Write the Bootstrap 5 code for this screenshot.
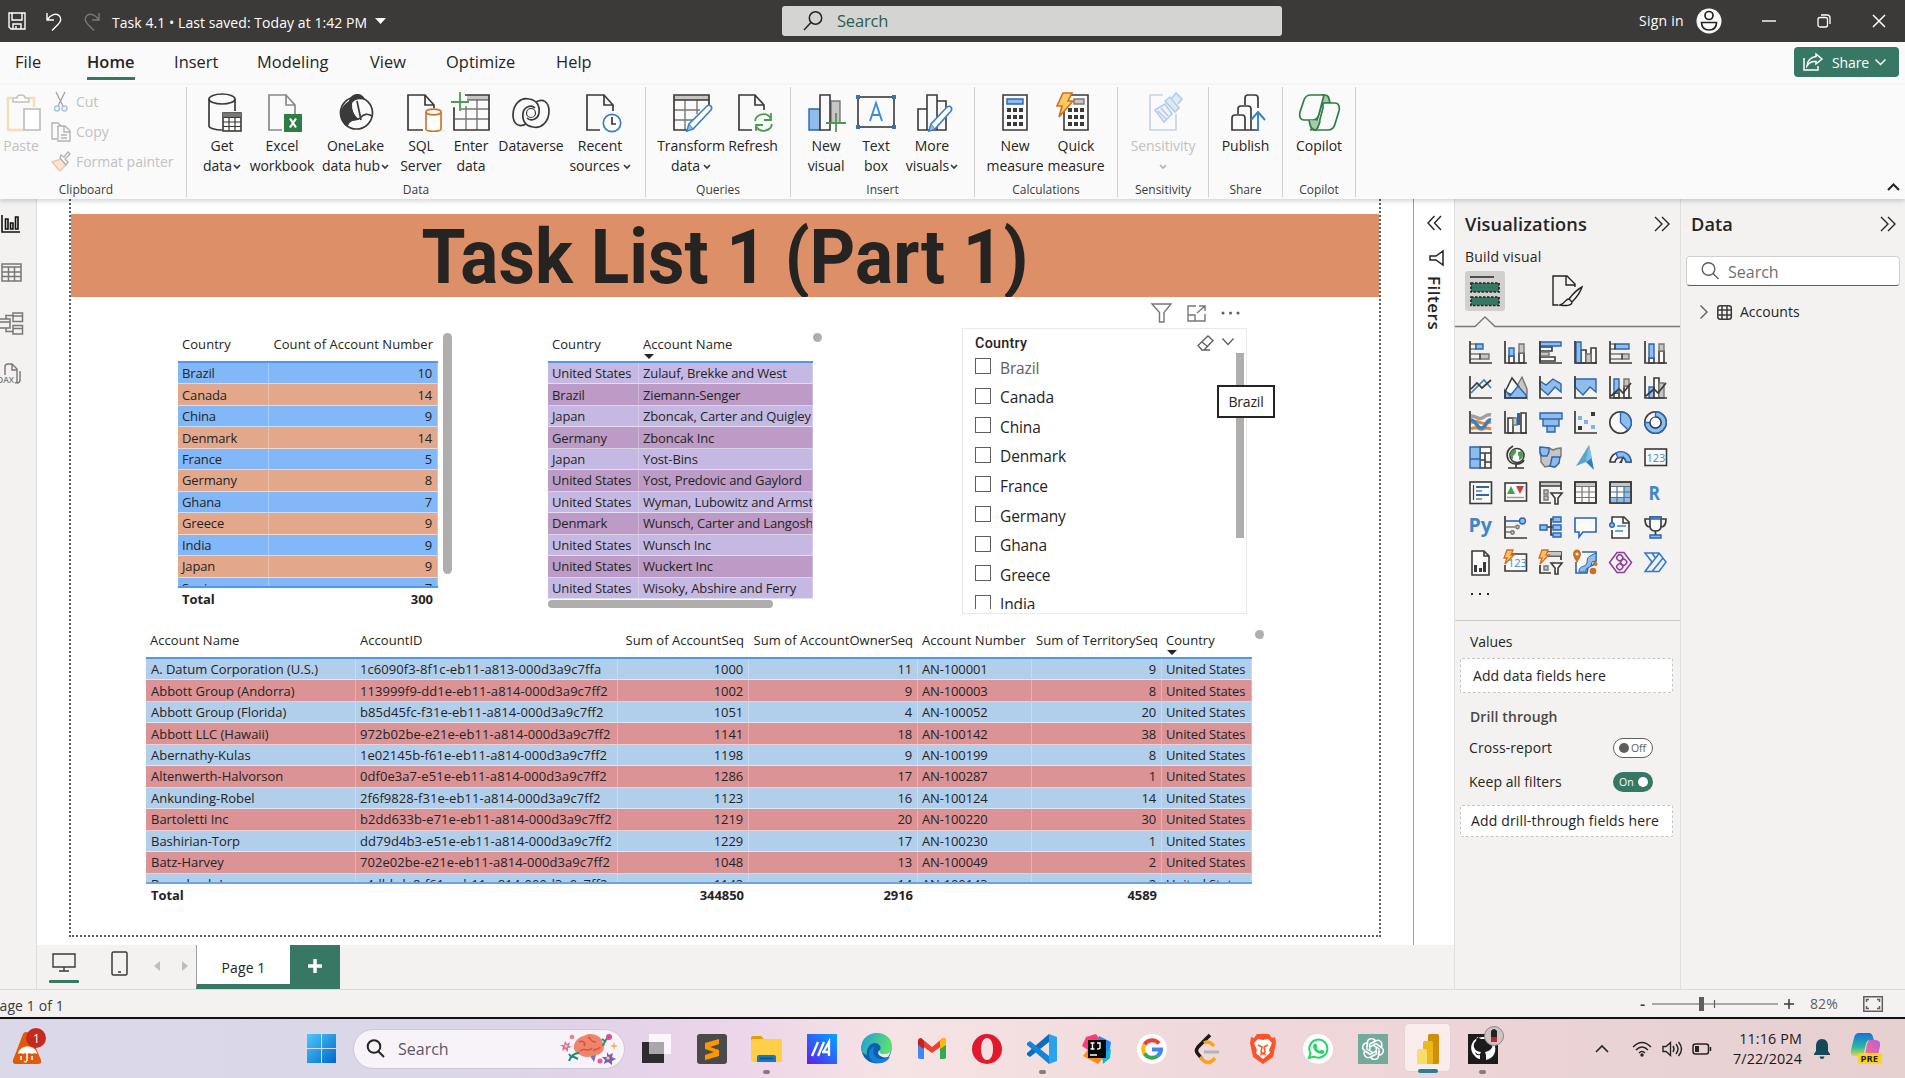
<!DOCTYPE html>
<html lang="en">
<head>
<meta charset="utf-8">
<title>Task 4.1 - Power BI Desktop</title>
<meta name="viewport" content="width=device-width, initial-scale=1">
<link href="https://cdn.jsdelivr.net/npm/bootstrap@5.3.0/dist/css/bootstrap.min.css" rel="stylesheet">
<style>
html,body{height:100%;overflow:hidden}
body{font-family:"Open Sans","Noto Sans",sans-serif;font-size:14px;line-height:20px;color:#252423;width:1905px;height:1078px;background:#f3f2f1}
svg{display:block;flex:none;overflow:visible}
.k{fill:none;stroke:#3b3a39;stroke-width:1.7}
.k1{fill:none;stroke:#3b3a39;stroke-width:1.2}
.w{fill:#fafafa;stroke:#3b3a39;stroke-width:1.6}
.b{fill:#8fbce9;stroke:#2a66b2;stroke-width:1.4}
.g{fill:#c8c6c4;stroke:#797775;stroke-width:1.4}
.gn{fill:none;stroke:#4d9a55;stroke-width:1.8}
/* title bar */
.titlebar{height:42px;background:#3b3a38;color:#fff}
.tb-left{width:782px;font-size:14px;letter-spacing:.06px}
.tb-search{width:500px;height:30px;background:#d4d4d2;border-radius:3px;color:#2c5c4f;font-size:16.5px;letter-spacing:-.2px;padding-left:21px;gap:14px}
.tb-right{width:623px;font-size:14px;letter-spacing:.25px}
/* menu */
.menubar{height:43px;background:#fafafa}
.menubar .nav-link{color:#252423;padding:0;font-size:16.4px;line-height:24px;letter-spacing:.05px;height:35px;padding-top:8px;white-space:nowrap}
.menubar .nav-link.active{font-weight:600;border-bottom:3px solid #377865;height:38px}
.share-btn{width:105px;height:30px;background:#377865;color:#fff;border:0;border-radius:4px;padding:0 9px;font-size:14px;letter-spacing:-.1px}
/* ribbon */
.ribbon{height:114px;background:#fafafa;box-shadow:0 2px 5px rgba(0,0,0,.18);z-index:3;position:relative}
.rgroup{border-right:1px solid #d2d0ce;height:110px;margin-top:2px}
.rbtns{height:95px;padding-top:5px}
.rbtn{text-align:center;font-size:14px;line-height:20px;letter-spacing:-.06px;white-space:nowrap;display:flex;flex-direction:column;align-items:center;flex:none}
.rbtn svg.ic{margin-bottom:4px}
.rlabel{font-size:12px;line-height:16px;text-align:center;letter-spacing:0;color:#3b3a39}
.dimmed{color:#c3c1bf}
.cv{display:inline-block;width:8px;height:6px;vertical-align:1px;margin-left:1px}
/* body */
.work{height:790px}
.rail{width:37px;border-right:1px solid #dfdddb;background:#f3f2f1}
.stage{width:1376px;height:746px;background:#fff;overflow:hidden}
.report{width:1312px;height:738px;margin-left:32px;border:2px dotted #605e5c;border-top:0;padding-top:15px}
.banner{height:83px;background:#dd8f67;text-align:center;overflow:hidden}
.banner h1{font-family:Roboto,"Liberation Sans",sans-serif;font-weight:700;font-size:76px;line-height:83px;margin:0;padding-top:2px;color:#252423;white-space:nowrap;transform:scaleX(.936)}
.visrow{height:331px}
.pbi{border-collapse:separate;border-spacing:0;table-layout:fixed;font-size:13px;line-height:16px;letter-spacing:-.14px;white-space:nowrap}
.pbi th{font-weight:400;height:32px;padding:0 5px 5px 4px;border-bottom:2px solid #4f96f5;letter-spacing:.05px}
.pbi td{height:21.46px;padding:0 5px 0 4px;border-bottom:1px solid rgba(255,255,255,.55);border-right:1px solid rgba(255,255,255,.28);overflow:hidden}
.clipbox{overflow:hidden}
.t1 tr:nth-child(odd) td{background:#82b8f8}.t1 tr:nth-child(even) td{background:#e3a88b}
.t2 tr:nth-child(odd) td{background:#c5b9e3}.t2 tr:nth-child(even) td{background:#bc9bc6}
.t3 tr:nth-child(odd) td{background:#b1ceeb}.t3 tr:nth-child(even) td{background:#db9396}
.t3 td:nth-child(1){letter-spacing:-.02px;padding-left:5px}
.t3 td:nth-child(2){letter-spacing:.06px}
.totals{font-weight:700;font-size:13px;line-height:22px;letter-spacing:-.05px}
.sorted{position:relative}
.sorted::after{content:"";position:absolute;left:5px;bottom:2px;border:5px solid transparent;border-top:5px solid #252423;border-bottom:0}
.sbar{background:#b0aeac;border-radius:5px}
.slicer{width:285px;height:286px;border:1px solid #eaeaea;padding:4px 2px 4px 12px;position:relative}
.slicer-title{font-family:Roboto,sans-serif;font-weight:500;font-size:14.3px;letter-spacing:.3px;line-height:20px}
.slicer-item{height:29.55px;gap:9px;font-size:15.5px;line-height:22px;letter-spacing:-.12px}
.boxy{width:16px;height:16px;border:1.3px solid #605e5c;flex:none;margin-top:-3px}
.tip{position:absolute;left:254px;top:56px;width:58px;height:33px;background:#fff;border:2px solid #252423;font-size:14px;line-height:29px;text-align:center;letter-spacing:-.2px}
.filters{width:41px;height:746px;border-left:1px solid #a19f9d;background:#fff}
.filters span{writing-mode:vertical-rl;font-weight:600;font-size:17px;line-height:18px;letter-spacing:.5px}
.vizpane{width:226px;border-left:1px solid #e1dfdd;background:#f3f2f1}
.datapane{width:225px;border-left:1px solid #e1dfdd;background:#f3f2f1}
.pane-h{font-size:18.2px;font-weight:600;letter-spacing:.1px;line-height:24px}
.vgrid{display:grid;grid-template-columns:repeat(6,35px);grid-auto-rows:35px;padding:13px 0 0 14px}
.well{border:1px dashed #c8c6c4;border-radius:2px;background:#fff;width:213px;margin-left:5px;font-size:14px}
.tog{width:40px;height:20px;border-radius:10px;font-size:10.5px;line-height:18px}
.dsearch{width:214px;height:30px;background:#fff;border:1px solid #d2d0ce;border-bottom-color:#605e5c;border-radius:4px;font-size:16px;color:#706e6c;padding-left:14px;gap:9px}
.pagebar{height:44px;background:#f3f2f1}
.ptab{width:94px;background:#fff;border-left:1px solid #a19f9d;border-bottom:5px solid #377865;font-size:14px;letter-spacing:.1px}
.padd{width:50px;background:#377865}
.status{height:30px;border-top:1px solid #dddbd9;border-bottom:2px solid #111;background:#f3f2f1;font-size:14px;letter-spacing:.1px;color:#3b3a39;overflow:hidden}
.task{height:59px;background:linear-gradient(90deg,#dad8e9 0,#dbd7e8 23%,#e0d3e8 30%,#ecd4ea 38%,#f6e3e3 47%,#f4dfe0 54%,#efd7db 65%,#ecd4d6 80%,#e6d0d0 100%)}
.tslot{width:55.1px;height:59px;position:relative;display:flex;justify-content:center;align-items:center}
.tslot.run::after{content:"";position:absolute;bottom:4px;left:24px;width:7px;height:4px;border-radius:2px;background:#847c80}
.tslot.now::before{content:"";position:absolute;left:4px;top:4px;width:47px;height:49px;border-radius:5px;background:#f8edec;border:1px solid #e3d3d3}
.tslot.now::after{content:"";position:absolute;bottom:5px;left:18px;width:20px;height:4px;border-radius:2px;background:#2a7f96}
.tslot svg{position:relative}
.tsearch{width:272px;height:40px;border-radius:20px;background:#f7f3f9;border:1px solid #cfc6d6;padding-left:12px;font-size:16px;color:#5a5860}
.clock{font-size:14.3px;line-height:20px;text-align:right;letter-spacing:.15px;color:#1b1a1a}
</style>
</head>
<body class="d-flex flex-column">

<!-- Title bar -->
<header class="titlebar d-flex align-items-center flex-shrink-0">
  <div class="tb-left d-flex align-items-center">
    <svg width="18" height="18" viewBox="0 0 18 18" style="margin-left:8px" fill="none" stroke="#fff" stroke-width="1.4"><path d="M1 1h16v16H3l-2-2zM4 1v7h10V1M5 17v-5h8v5M8 14v3"/></svg>
    <svg width="18" height="19" viewBox="0 0 18 19" style="margin-left:19px" fill="none" stroke="#fff" stroke-width="1.4"><path d="M2 1v7h7M2 8C6 2 11 1 14 3.500c3 3 2 6-1 9L7 18.500"/></svg>
    <svg width="18" height="19" viewBox="0 0 18 19" style="margin-left:20px" fill="none" stroke="#7b7977" stroke-width="1.4"><path d="M16 1v7H9M16 8C12 2 7 1 4 3.500c-3 3-2 6 1 9l6 6"/></svg>
    <span style="margin-left:11px;margin-top:4px">Task 4.1 • Last saved: Today at 1:42 PM</span>
    <svg width="11" height="6" viewBox="0 0 11 6" style="margin-left:8px"><path d="M0 0h11L5.500 6z" fill="#fff"/></svg>
  </div>
  <div class="tb-search d-flex align-items-center">
    <svg width="20" height="20" viewBox="0 0 20 20" fill="none" stroke="#252423" stroke-width="1.5"><circle cx="12.500" cy="7" r="6.200"/><path d="M8 11.500L1 19"/></svg>
    <span>Search</span>
  </div>
  <div class="tb-right d-flex align-items-center">
    <span style="margin-left:357px;width:45px;white-space:nowrap">Sign in</span>
    <svg width="26" height="26" viewBox="0 0 26 26" style="margin-left:12px"><circle cx="13" cy="13" r="12.500" fill="#fafafa"/><circle cx="13" cy="7.500" r="4" fill="none" stroke="#252423" stroke-width="1.7"/><path d="M5.500 14.500h15c0 5-3 7.500-7.500 7.500s-7.500-2.500-7.500-7.500z" fill="none" stroke="#252423" stroke-width="1.700"/></svg>
    <svg width="14" height="14" viewBox="0 0 14 14" style="margin-left:40px"><path d="M0 7h14" stroke="#fff" stroke-width="1.400"/></svg>
    <svg width="14" height="14" viewBox="0 0 14 14" style="margin-left:41px" fill="none" stroke="#fff" stroke-width="1.300"><rect x="1" y="3.500" width="9.500" height="9.500" rx="2"/><path d="M4 1h6q3 0 3 3v6"/></svg>
    <svg width="14" height="14" viewBox="0 0 14 14" style="margin-left:41px"><path d="M1 1l12 12M13 1L1 13" stroke="#fff" stroke-width="1.500"/></svg>
  </div>
</header>

<!-- Menu tabs -->
<nav class="menubar d-flex flex-shrink-0">
  <ul class="nav flex-nowrap flex-grow-1" style="padding-left:15px">
    <li class="nav-item" style="width:72px"><a class="nav-link" href="#">File</a></li>
    <li class="nav-item" style="width:87px"><a class="nav-link active d-inline-block" href="#">Home</a></li>
    <li class="nav-item" style="width:83px"><a class="nav-link" href="#">Insert</a></li>
    <li class="nav-item" style="width:113px"><a class="nav-link" href="#">Modeling</a></li>
    <li class="nav-item" style="width:76px"><a class="nav-link" href="#">View</a></li>
    <li class="nav-item" style="width:110px"><a class="nav-link" href="#">Optimize</a></li>
    <li class="nav-item"><a class="nav-link" href="#">Help</a></li>
  </ul>
  <button class="share-btn btn d-flex align-items-center" style="margin:5px 6px 0 0">
    <svg width="20" height="18" viewBox="0 0 20 18" fill="none" stroke="#fff" stroke-width="1.500"><path d="M1 5v12h14v-4M13 1l6 5-6 5V8.500C9 8 6 9.500 4 13c0-5 4-9 9-9.500z"/></svg>
    <span style="margin-left:9px">Share</span>
    <svg width="11" height="7" viewBox="0 0 11 7" style="margin-left:6px" fill="none" stroke="#fff" stroke-width="1.500"><path d="M.5.5l5 5 5-5"/></svg>
  </button>
</nav>

<!-- Ribbon -->
<section class="ribbon d-flex flex-shrink-0">
  <div class="rgroup" style="width:187px">
    <div class="rbtns d-flex">
      <div class="rbtn dimmed" style="width:42px"><svg class="ic" width="40" height="40" viewBox="0 0 40 40" fill="none"><path d="M11 6H7v32h16M29 6h4v9" stroke="#f5dcba" stroke-width="2.500"/><path d="M12 10V6h4c0-4 8-4 8 0h4v4z" stroke="#c3c1bf" stroke-width="1.500" fill="#fff"/><path d="M23 17h16v21H23z" stroke="#bdbbb9" stroke-width="1.600" fill="#fff"/></svg>Paste</div>
      <div class="dimmed" style="font-size:14px;letter-spacing:-.02px;padding-left:9px">
        <div class="d-flex align-items-center" style="height:20px;gap:5px;margin-bottom:10px;white-space:nowrap"><svg width="20" height="20" viewBox="0 0 20 20" fill="none"><path d="M5 0l7 14M14 0L7 14" stroke="#a3a19f" stroke-width="1.300"/><circle cx="6" cy="16.500" r="2.500" stroke="#a6c4e2" stroke-width="1.400"/><circle cx="13.500" cy="16.500" r="2.500" stroke="#a6c4e2" stroke-width="1.400"/></svg>Cut</div>
        <div class="d-flex align-items-center" style="height:20px;gap:5px;margin-bottom:10px"><svg width="20" height="20" viewBox="0 0 20 20" fill="none" stroke="#b5b3b1" stroke-width="1.400"><path d="M6 17H1V1h6l3 3M7 4h7l5 5v10H7zM13 4v6h6M10 13h6M10 16h6"/></svg>Copy</div>
        <div class="d-flex align-items-center" style="height:20px;gap:5px;white-space:nowrap"><svg width="20" height="20" viewBox="0 0 20 20" fill="none" stroke-width="1.400"><path d="M1 10l9-3 5 6-6 6z" fill="#fbe6d3" stroke="#e8c9a9"/><path d="M9 6l6 7 2-3-3-3 5-5-2-2-4 5-3-2z" stroke="#b5b3b1" fill="#fff"/></svg>Format painter</div>
      </div>
    </div>
    <div class="rlabel" style="padding-right:14px">Clipboard</div>
  </div>

  <div class="rgroup" style="width:459px">
    <div class="rbtns d-flex" style="padding-left:9px">
      <div class="rbtn" style="width:52px"><svg class="ic" width="40" height="40" viewBox="0 0 40 40"><path class="k" d="M7 7v27c0 2 6 4 13 4M33 7v12" /><ellipse class="k" cx="20" cy="7" rx="13" ry="5"/><rect class="w" x="21" y="21" width="18" height="18"/><path d="M21 21h18v4H21z" fill="#797775"/><path class="k1" d="M21 25.500h18M21 30h18M21 34.500h18M27 25v14M33 25v14"/></svg>Get<br><span>data<svg class="cv" viewBox="0 0 8 6"><path class="k" d="M1 1l3 3 3-3"/></svg></span></div>
      <div class="rbtn" style="width:68px"><svg class="ic" width="40" height="40" viewBox="0 0 40 40"><path d="M20 38H7V3h17l9 10v9M24 3v10h9" fill="none" stroke="#8a8886" stroke-width="1.700"/><rect x="22" y="22" width="18" height="18" fill="#2e7d46"/><path d="M28 26.500l6 9M34 26.500l-6 9" stroke="#fff" stroke-width="2.200"/></svg>Excel<br>workbook</div>
      <div class="rbtn" style="width:82px;padding-right:3px"><svg class="ic" width="40" height="40" viewBox="0 0 40 40"><circle class="k" cx="20.500" cy="21" r="16"/><path d="M13 9c2-9 14-9 16-1-6-2-12 0-13 4 0 8 4 12 8 16-7-1-12 3-12 7-9-5-11-19 1-26z" fill="#3b3a39"/><path d="M17 10c-2 7 1 14 7 18l-4-18z" fill="#fafafa"/><path class="k" d="M9 33c4-8 11-3 15-7s7-5 12-2M21 9l4 19"/></svg>OneLake<br><span>data hub<svg class="cv" viewBox="0 0 8 6"><path class="k" d="M1 1l3 3 3-3"/></svg></span></div>
      <div class="rbtn" style="width:46px"><svg class="ic" width="40" height="40" viewBox="0 0 40 40"><path class="k" d="M22 38H7V3h17l9 10v3M24 3v10h9"/><path d="M25 20v17c0 3 15 3 15 0V20" fill="#fff" stroke="#cf7630" stroke-width="1.700"/><ellipse cx="32.500" cy="20" rx="7.500" ry="2.800" fill="#fff" stroke="#cf7630" stroke-width="1.700"/></svg>SQL<br>Server</div>
      <div class="rbtn" style="width:54px"><svg class="ic" width="40" height="40" viewBox="0 0 40 40"><path d="M16 3h22v5H16z" fill="#c8c6c4"/><path d="M10 17h28M4 27h34M15 14v24M26 8v30" stroke="#797775" stroke-width="1.400"/><path class="k" d="M14 3h24v35H3V16"/><path d="M3 17v-2M16 8h22" class="k1"/><path class="gn" d="M9 0v19M0 10h18"/></svg>Enter<br>data</div>
      <div class="rbtn" style="width:66px"><svg class="ic" width="40" height="40" viewBox="0 0 40 40"><g class="k"><path d="M15 32C8 36 2 32 2 23 2 12 10 5 18 7c8 1 11 7 10 14-1 6-8 9-12 5"/><path d="M25 10c7-4 13 0 13 9 0 11-8 18-16 16-8-1-11-7-10-14 1-6 8-9 12-5"/></g><circle class="k1" cx="20" cy="21" r="4.500"/></svg>Dataverse</div>
      <div class="rbtn" style="width:72px"><svg class="ic" width="40" height="40" viewBox="0 0 40 40"><path class="k" d="M20 38H7V3h17l9 10v6M24 3v10h9"/><circle cx="32" cy="31" r="8.700" fill="#fff" stroke="#3a7fc4" stroke-width="1.700"/><path class="k" d="M32 25v7h4"/></svg>Recent<br><span>sources<svg class="cv" viewBox="0 0 8 6" style="margin-left:3px"><path class="k" d="M1 1l3 3 3-3"/></svg></span></div>
    </div>
    <div class="rlabel">Data</div>
  </div>

  <div class="rgroup" style="width:145px">
    <div class="rbtns d-flex" style="padding-left:10px">
      <div class="rbtn" style="width:70px"><svg class="ic" width="40" height="40" viewBox="0 0 40 40"><path d="M3 3h35v5H3z" fill="#c8c6c4"/><path d="M3 18h26M3 28h20M14 8v30M26 8v14" stroke="#797775" stroke-width="1.400"/><path class="k" d="M16 38H3V3h35v10M3 8h35"/><path d="M16 39l2-7 18-18c3-2 6 1 4 4L22 37z" fill="#fff" stroke="#3a7fc4" stroke-width="1.600"/><path d="M16 39l2-7 4 5z" fill="#8fbce9" stroke="#3a7fc4"/></svg>Transform<br><span>data<svg class="cv" viewBox="0 0 8 6" style="margin-left:3px"><path class="k" d="M1 1l3 3 3-3"/></svg></span></div>
      <div class="rbtn" style="width:54px"><svg class="ic" width="40" height="40" viewBox="0 0 40 40"><path class="k" d="M19 38H6V3h16l9 10v5M22 3v10h9"/><path class="gn" d="M22 29c1-7 12-10 16-2M38 21v7h-7M39 32c-1 7-12 10-16 2M23 39v-6h7"/></svg>Refresh</div>
    </div>
    <div class="rlabel">Queries</div>
  </div>

  <div class="rgroup" style="width:184px">
    <div class="rbtns d-flex" style="padding-left:11px">
      <div class="rbtn" style="width:48px"><svg class="ic" width="40" height="40" viewBox="0 0 40 40"><path class="b" d="M3 17h11v21H3z"/><path class="g" d="M25 9h9v22h-9z"/><path class="w" d="M14 3h10v35H14z"/><path class="gn" d="M30 21v19M20 31h20"/></svg>New<br>visual</div>
      <div class="rbtn" style="width:52px"><svg class="ic" width="40" height="40" viewBox="0 0 40 40"><rect class="w" x="2" y="5" width="36" height="30"/><path d="M0 3h4v4H0zM36 3h4v4h-4zM0 33h4v4H0zM36 33h4v4h-4z" fill="#2f75b8"/><path d="M14 29l6-18 6 18M16 23h8" fill="none" stroke="#3a8bd6" stroke-width="1.900"/></svg>Text<br>box</div>
      <div class="rbtn" style="width:60px"><svg class="ic" width="40" height="40" viewBox="0 0 40 40"><path class="w" d="M6 17h9v21H6zM15 3h10v35H15zM25 9h9v29h-9z"/><path d="M17 39l2-7 16-17c3-2 6 1 4 4L23 37z" fill="#fff" stroke="#3a7fc4" stroke-width="1.600"/><path d="M17 39l2-7 4 5z" fill="#8fbce9" stroke="#3a7fc4"/></svg>More<br><span>visuals<svg class="cv" viewBox="0 0 8 6"><path class="k" d="M1 1l3 3 3-3"/></svg></span></div>
    </div>
    <div class="rlabel">Insert</div>
  </div>

  <div class="rgroup" style="width:143px">
    <div class="rbtns d-flex" style="padding-left:11px">
      <div class="rbtn" style="width:58px"><svg class="ic" width="40" height="40" viewBox="0 0 40 40"><path class="w" d="M8 3h24v35H8z"/><path class="b" d="M12 7h16v5H12z"/><path d="M12 18h16M12 25h16M12 32h16" stroke="#3b3a39" stroke-width="4" stroke-dasharray="4 2"/></svg>New<br>measure</div>
      <div class="rbtn" style="width:64px"><svg class="ic" width="40" height="40" viewBox="0 0 40 40"><path class="w" d="M8 3h24v35H8z"/><path class="g" d="M18 7h10v5H18z"/><path d="M12 18h16M12 25h16M12 32h16" stroke="#3b3a39" stroke-width="4" stroke-dasharray="4 2"/><path d="M7 1h9l-4 8h5L3 25l3-11H1z" fill="#ffc966" stroke="#cf6f20" stroke-width="1.600"/></svg>Quick<br>measure</div>
    </div>
    <div class="rlabel">Calculations</div>
  </div>

  <div class="rgroup" style="width:91px">
    <div class="rbtns d-flex justify-content-center">
      <div class="rbtn dimmed"><svg class="ic" width="40" height="40" viewBox="0 0 40 40" fill="none" stroke="#b3cde8" stroke-width="1.600"><path d="M20 3H7v35h26V22" stroke="#c3d4e4"/><path d="M12 18l10-6 7 10-8 8zM15 19l8 8M18 16l7 8" fill="#eaf2fa"/><path d="M22 9l5-4 9 11-4 4zM29 6l4-5 6 6-4 5" fill="#dbe9f6"/></svg>Sensitivity<br><svg width="8" height="6" viewBox="0 0 8 6" style="margin-top:8px"><path d="M1 1l3 3 3-3" fill="none" stroke="#b5b3b1" stroke-width="1.700"/></svg></div>
    </div>
    <div class="rlabel">Sensitivity</div>
  </div>
  <div class="rgroup" style="width:74px">
    <div class="rbtns d-flex justify-content-center">
      <div class="rbtn"><svg class="ic" width="40" height="40" viewBox="0 0 40 40"><path class="k" d="M20 38H7V26q0-3 3-3h7q3 0 3 3v12h12M13 22v-5q0-3 3-3h7q3 0 3 3v21M20 13V6q0-3 3-3h7q3 0 3 3v10"/><path d="M33 39V21M26 28l7-8 7 8" fill="none" stroke="#3a7fc4" stroke-width="1.900"/></svg>Publish</div>
    </div>
    <div class="rlabel">Share</div>
  </div>
  <div class="rgroup" style="width:73px">
    <div class="rbtns d-flex justify-content-center">
      <div class="rbtn"><svg class="ic" width="40" height="40" viewBox="0 0 40 40"><g fill="#fafafa" stroke="#2f7d46" stroke-width="1.700"><path d="M22 3h4c4 0 4 4 5 8h-5c-3 0-4 3-5 7l-4 14c-1 4-3 6-6 6" fill="#a6c9a9"/><path d="M12 3h13l-5 19c-1 4-3 6-6 6H5c-4 0-5-4-4-8l4-12c1-3 3-5 7-5z"/><path d="M25 11h11c4 0 5 4 4 8l-4 13c-1 4-3 6-7 6H14c3 0 5-3 6-7l4-15c0-3 0-5 1-5z"/><path d="M10 28c1 6 2 10 7 10 2-2 3-5 4-9" fill="#a6c9a9"/></g></svg>Copilot</div>
    </div>
    <div class="rlabel">Copilot</div>
  </div>
  <div class="ms-auto align-self-end" style="padding:0 5px 8px 0"><svg width="13" height="8" viewBox="0 0 13 8"><path d="M1 7l5.500-5.500L12 7" fill="none" stroke="#252423" stroke-width="2"/></svg></div>
</section>

<!-- Work area -->
<main class="work d-flex flex-shrink-0">
  <aside class="rail d-flex flex-column">
    <svg width="20" height="18" viewBox="0 0 20 18" style="margin:16px 0 0 1px"><path d="M1 0v17h18M4.500 4h2.500v10H4.500zM9.500 8h2.500v6H9.500zM14.500 2h2.500v12h-2.500z" fill="none" stroke="#111" stroke-width="1.600"/></svg>
    <svg width="21" height="19" viewBox="0 0 21 19" style="margin:30px 0 0 1px" fill="none" stroke="#797775" stroke-width="1.500"><path d="M1 1h19v17H1zM1 4h19M1 9h19M1 13.500h19M7.500 4v14M13.500 4v14"/></svg>
    <svg width="24" height="23" viewBox="0 0 24 23" style="margin:30px 0 0 0" fill="none" stroke="#797775" stroke-width="1.500"><path d="M0 7h10v9H0M0 10h10M13 1h9.500v8.500H13zM13 4h9.500M13 13.500h9.500V22H13zM13 16.500h9.500M6 7V3.500h7M6 16v3.500h7"/></svg>
    <svg width="22" height="21" viewBox="0 0 22 21" style="margin:28px 0 0 -1px" fill="none" stroke="#797775" stroke-width="1.400"><path d="M6 12V4q0-3 3-3h4l5 5v12q0 2-2 2M13 1v6h5M21 8v9q0 3-3 3"/><text x="-2" y="20" font-size="8.500" font-weight="600" fill="#797775" stroke="none">DAX</text></svg>
  </aside>

  <div class="d-flex flex-column" style="width:1417px">
    <div class="d-flex">
      <div class="stage">
        <div class="report">
          <div class="banner"><h1>Task List 1 (Part 1)</h1></div>
          <div class="visrow d-flex">

            <div class="d-flex" style="margin:34px 0 0 107px;width:370px">
              <div style="width:260px">
                <div class="clipbox" style="height:257px;border-bottom:2px solid #4f96f5">
                  <table class="pbi" style="width:260px">
                    <colgroup><col style="width:91px"><col></colgroup>
                    <thead><tr><th>Country</th><th class="text-end">Count of Account Number</th></tr></thead>
                    <tbody class="t1">
                      <tr><td>Brazil</td><td class="text-end">10</td></tr>
                      <tr><td>Canada</td><td class="text-end">14</td></tr>
                      <tr><td>China</td><td class="text-end">9</td></tr>
                      <tr><td>Denmark</td><td class="text-end">14</td></tr>
                      <tr><td>France</td><td class="text-end">5</td></tr>
                      <tr><td>Germany</td><td class="text-end">8</td></tr>
                      <tr><td>Ghana</td><td class="text-end">7</td></tr>
                      <tr><td>Greece</td><td class="text-end">9</td></tr>
                      <tr><td>India</td><td class="text-end">9</td></tr>
                      <tr><td>Japan</td><td class="text-end">9</td></tr>
                      <tr><td>Spain</td><td class="text-end">7</td></tr>
                    </tbody>
                  </table>
                </div>
                <div class="totals d-flex justify-content-between" style="padding:0 5px 0 4px"><span>Total</span><span>300</span></div>
              </div>
              <div class="sbar" style="width:9px;height:241px;margin:2px 0 0 5px"></div>
            </div>

            <div style="margin:34px 0 0 0;width:274px">
              <div class="d-flex">
                <div class="clipbox" style="width:265px;height:268px;flex:none">
                  <table class="pbi" style="width:265px">
                    <colgroup><col style="width:91px"><col></colgroup>
                    <thead><tr><th>Country</th><th class="sorted">Account Name</th></tr></thead>
                    <tbody class="t2">
                      <tr><td>United States</td><td>Zulauf, Brekke and West</td></tr>
                      <tr><td>Brazil</td><td>Ziemann-Senger</td></tr>
                      <tr><td>Japan</td><td>Zboncak, Carter and Quigley</td></tr>
                      <tr><td>Germany</td><td>Zboncak Inc</td></tr>
                      <tr><td>Japan</td><td>Yost-Bins</td></tr>
                      <tr><td>United States</td><td>Yost, Predovic and Gaylord</td></tr>
                      <tr><td>United States</td><td>Wyman, Lubowitz and Armstrong</td></tr>
                      <tr><td>Denmark</td><td>Wunsch, Carter and Langosh</td></tr>
                      <tr><td>United States</td><td>Wunsch Inc</td></tr>
                      <tr><td>United States</td><td>Wuckert Inc</td></tr>
                      <tr><td>United States</td><td>Wisoky, Abshire and Ferry</td></tr>
                    </tbody>
                  </table>
                </div>
                <div class="sbar flex-shrink-0" style="width:9px;height:9px;margin:2px 0 0 0"></div>
              </div>
              <div class="sbar" style="width:225px;height:8px;margin:1px 0 0 0"></div>
            </div>

            <div style="margin:6px 0 0 140px;width:286px">
              <div class="d-flex justify-content-end" style="height:25px;padding-right:7px;gap:15px">
                <svg width="21" height="20" viewBox="0 0 21 20" fill="none" stroke="#797775" stroke-width="1.400"><path d="M1 1h19l-7 8.500V19H8.500V9.500z"/></svg>
                <svg width="19" height="18" viewBox="0 0 19 18" fill="none" stroke="#797775" stroke-width="1.400" style="margin-top:2px"><path d="M9 1H1v15h17V9M1 10h7v6M12 1h6v5M18 1l-8 7"/></svg>
                <svg width="20" height="18" viewBox="0 0 20 18" fill="#605e5c"><circle cx="2" cy="10" r="1.500"/><circle cx="9.500" cy="10" r="1.500"/><circle cx="17" cy="10" r="1.500"/></svg>
              </div>
              <div class="slicer">
                <div class="d-flex align-items-center">
                  <span class="slicer-title flex-grow-1">Country</span>
                  <svg width="17" height="16" viewBox="0 0 17 16" fill="none" stroke="#605e5c" stroke-width="1.300"><path d="M1 10.500L11 1l5 4.500L7 15H5zM5 7l6 5M5 15h8"/></svg>
                  <svg width="12" height="8" viewBox="0 0 12 8" fill="none" stroke="#605e5c" stroke-width="1.300" style="margin:-3px 10px 0 8px"><path d="M.5.500L6 6.500 11.500.5"/></svg>
                </div>
                <div class="d-flex justify-content-between">
                  <div class="clipbox" style="height:256px">
                    <div class="slicer-item d-flex align-items-center" style="color:#605e5c"><i class="boxy"></i>Brazil</div>
                    <div class="slicer-item d-flex align-items-center"><i class="boxy"></i>Canada</div>
                    <div class="slicer-item d-flex align-items-center"><i class="boxy"></i>China</div>
                    <div class="slicer-item d-flex align-items-center"><i class="boxy"></i>Denmark</div>
                    <div class="slicer-item d-flex align-items-center"><i class="boxy"></i>France</div>
                    <div class="slicer-item d-flex align-items-center"><i class="boxy"></i>Germany</div>
                    <div class="slicer-item d-flex align-items-center"><i class="boxy"></i>Ghana</div>
                    <div class="slicer-item d-flex align-items-center"><i class="boxy"></i>Greece</div>
                    <div class="slicer-item d-flex align-items-center"><i class="boxy"></i>India</div>
                  </div>
                  <div style="width:8px;height:185px;background:#b0aeac"></div>
                </div>
                <div class="tip">Brazil</div>
              </div>
            </div>
          </div>

          <div class="d-flex" style="margin:-1px 0 0 75px">
            <div style="width:1106px">
              <div class="clipbox" style="height:257px;border-bottom:2px solid #6aa2ec">
                <table class="pbi" style="width:1106px">
                  <colgroup><col style="width:210px"><col style="width:262px"><col style="width:131px"><col style="width:169px"><col style="width:114px"><col style="width:130px"><col></colgroup>
                  <thead><tr><th>Account Name</th><th>AccountID</th><th class="text-end">Sum of AccountSeq</th><th class="text-end">Sum of AccountOwnerSeq</th><th>Account Number</th><th class="text-end">Sum of TerritorySeq</th><th class="sorted">Country</th></tr></thead>
                  <tbody class="t3">
                    <tr><td>A. Datum Corporation (U.S.)</td><td>1c6090f3-8f1c-eb11-a813-000d3a9c7ffa</td><td class="text-end">1000</td><td class="text-end">11</td><td>AN-100001</td><td class="text-end">9</td><td>United States</td></tr>
                    <tr><td>Abbott Group (Andorra)</td><td>113999f9-dd1e-eb11-a814-000d3a9c7ff2</td><td class="text-end">1002</td><td class="text-end">9</td><td>AN-100003</td><td class="text-end">8</td><td>United States</td></tr>
                    <tr><td>Abbott Group (Florida)</td><td>b85d45fc-f31e-eb11-a814-000d3a9c7ff2</td><td class="text-end">1051</td><td class="text-end">4</td><td>AN-100052</td><td class="text-end">20</td><td>United States</td></tr>
                    <tr><td>Abbott LLC (Hawaii)</td><td>972b02be-e21e-eb11-a814-000d3a9c7ff2</td><td class="text-end">1141</td><td class="text-end">18</td><td>AN-100142</td><td class="text-end">38</td><td>United States</td></tr>
                    <tr><td>Abernathy-Kulas</td><td>1e02145b-f61e-eb11-a814-000d3a9c7ff2</td><td class="text-end">1198</td><td class="text-end">9</td><td>AN-100199</td><td class="text-end">8</td><td>United States</td></tr>
                    <tr><td>Altenwerth-Halvorson</td><td>0df0e3a7-e51e-eb11-a814-000d3a9c7ff2</td><td class="text-end">1286</td><td class="text-end">17</td><td>AN-100287</td><td class="text-end">1</td><td>United States</td></tr>
                    <tr><td>Ankunding-Robel</td><td>2f6f9828-f31e-eb11-a814-000d3a9c7ff2</td><td class="text-end">1123</td><td class="text-end">16</td><td>AN-100124</td><td class="text-end">14</td><td>United States</td></tr>
                    <tr><td>Bartoletti Inc</td><td>b2dd633b-e71e-eb11-a814-000d3a9c7ff2</td><td class="text-end">1219</td><td class="text-end">20</td><td>AN-100220</td><td class="text-end">30</td><td>United States</td></tr>
                    <tr><td>Bashirian-Torp</td><td>dd79d4b3-e51e-eb11-a814-000d3a9c7ff2</td><td class="text-end">1229</td><td class="text-end">17</td><td>AN-100230</td><td class="text-end">1</td><td>United States</td></tr>
                    <tr><td>Batz-Harvey</td><td>702e02be-e21e-eb11-a814-000d3a9c7ff2</td><td class="text-end">1048</td><td class="text-end">13</td><td>AN-100049</td><td class="text-end">2</td><td>United States</td></tr>
                    <tr><td>Baumbach Inc</td><td>c4dbbda8-f61e-eb11-a814-000d3a9c7ff2</td><td class="text-end">1142</td><td class="text-end">14</td><td>AN-100143</td><td class="text-end">2</td><td>United States</td></tr>
                  </tbody>
                </table>
              </div>
              <div class="totals d-flex"><span style="width:210px;padding-left:5px">Total</span><span class="text-end" style="width:388px">344850</span><span class="text-end" style="width:169px">2916</span><span class="text-end" style="width:244px">4589</span></div>
            </div>
            <div class="sbar" style="width:9px;height:9px;margin:3px 0 0 3px"></div>
          </div>
        </div>
      </div>
      <div class="filters d-flex flex-column align-items-center">
        <svg width="15" height="16" viewBox="0 0 15 16" fill="none" stroke="#252423" stroke-width="1.400" style="margin-top:16px"><path d="M7.500 1L1 8l6.500 7M14 1L7.500 8l6.500 7"/></svg>
        <svg width="15" height="16" viewBox="0 0 15 16" fill="none" stroke="#252423" stroke-width="1.500" style="margin:19px 0 0 5px"><path d="M14 1v14L7 10H1V6h6z"/></svg>
        <span style="margin-top:10px">Filters</span>
      </div>
    </div>
    <div class="pagebar d-flex">
      <div class="d-flex flex-column align-items-center" style="width:30px;margin-left:12px">
        <svg width="24" height="19" viewBox="0 0 24 19" fill="none" stroke="#3b3a39" stroke-width="1.400" style="margin-top:8px"><path d="M1 1h22v13H1zM12 14v4M7 18h10"/></svg>
        <div style="width:30px;height:3px;background:#377865;margin-top:8px;border-radius:1px"></div>
      </div>
      <svg width="17" height="25" viewBox="0 0 17 25" fill="none" stroke="#3b3a39" stroke-width="1.500" style="margin:6px 0 0 32px"><rect x="1" y="1" width="15" height="23" rx="1.500"/><path d="M7 21h3"/></svg>
      <svg width="6" height="10" viewBox="0 0 6 10" style="margin:16px 0 0 26px"><path d="M6 0v10L0 5z" fill="#c0bebc"/></svg>
      <svg width="6" height="10" viewBox="0 0 6 10" style="margin:16px 0 0 22px"><path d="M0 0v10l6-5z" fill="#c0bebc"/></svg>
      <div class="ptab d-flex align-items-center justify-content-center" style="margin-left:8px;padding-top:6px">Page 1</div>
      <div class="padd d-flex align-items-center justify-content-center"><svg width="14" height="14" viewBox="0 0 14 14" style="margin-top:-2px"><path d="M7 0v14M0 7h14" stroke="#fff" stroke-width="3.500"/></svg></div>
    </div>
  </div>

  <aside class="vizpane">
    <div class="d-flex align-items-center justify-content-between" style="padding:13px 10px 0 10px"><span class="pane-h">Visualizations</span><svg width="16" height="16" viewBox="0 0 16 16" fill="none" stroke="#252423" stroke-width="1.400"><path d="M1 1l7 7-7 7M8 1l7 7-7 7"/></svg></div>
    <div style="padding:11px 0 4px 10px;font-size:14px;line-height:20px;letter-spacing:.2px">Build visual</div>
    <div class="d-flex" style="padding-left:10px">
      <div class="d-flex align-items-center justify-content-center" style="width:40px;height:40px;background:#d2d0ce;border-radius:3px"><svg width="30" height="30" viewBox="0 0 30 30"><path d="M0 1h24" stroke="#252423" stroke-width="1.500"/><path d="M1 7h28v9H1zM1 21h28v8.500H1z" fill="#377865" stroke="#252423" stroke-width="1.700" stroke-dasharray="2.500 1.500"/></svg></div>
      <svg width="32" height="32" viewBox="0 0 32 32" style="margin:4px 0 0 47px" fill="none" stroke="#252423" stroke-width="1.400"><path d="M6 30H1V1h14l8 8v3M14 1v9h9"/><path d="M30 12c-6 3-10 8-13 12l3 3c4-4 8-9 10-15zM17 24c-4 0-3 4-9 6 5 1 12 1 12-3" fill="#f3f2f1"/></svg>
    </div>
    <svg width="225" height="12" viewBox="0 0 225 12" style="margin-top:5px"><path d="M0 10.500h20l10-9.500 10 9.500h185" fill="none" stroke="#797775" stroke-width="1.300"/></svg>
    <div class="vgrid">
      <!-- bar and column charts -->
      <svg width="23" height="23"><path class="g" d="M11 13h9v5h-9z"/><path class="k1" d="M1 3h6v5H1M1 13h10v5H1"/><path class="b" d="M7 3h7v5H7z"/><path class="k" d="M1 0v22h22"/></svg>
      <svg width="23" height="23"><path class="w" d="M5 15h5v7H5zM15 12h5v10h-5z"/><path class="b" d="M5 7h5v8H5z"/><path class="g" d="M15 3h5v9h-5z"/><path class="k" d="M1 0v22h22"/></svg>
      <svg width="23" height="23"><path class="w" d="M1 6h12v4H1zM1 16h15v4H1z"/><path class="g" d="M1 11h9v4H1z"/><path class="b" d="M1 1h21v4H1z"/><path class="k" d="M1 0v22h22"/></svg>
      <svg width="23" height="23"><path class="w" d="M7 9h5v13H7zM17 7h5v15h-5z"/><path class="g" d="M12 13h5v9h-5z"/><path class="b" d="M2 1h5v21H2z"/><path class="k" d="M1 0v22h22"/></svg>
      <svg width="23" height="23"><path class="b" d="M6 3h14v5H6z"/><path class="g" d="M13 13h7v5h-7z"/><path class="k1" d="M1 3h5v5H1M1 13h12v5H1"/><path class="k" d="M1 0v22h22"/></svg>
      <svg width="23" height="23"><path class="w" d="M5 17h5v5H5zM15 10h5v12h-5z"/><path class="b" d="M5 3h5v14H5z"/><path class="g" d="M15 3h5v7h-5z"/><path class="k" d="M1 0v22h22"/></svg>
      <!-- line and area charts -->
      <svg width="23" height="23"><path d="M2 17L15 4l7 8" fill="none" stroke="#3a7fc4" stroke-width="1.600"/><path class="k" d="M2 13l6-6 5 5 9-8M1 0v22h22"/></svg>
      <svg width="23" height="23"><path class="g" d="M13 10l5-9 5 12v9z"/><path class="w" d="M1 16L8 2l7 9-7 8z"/><path class="b" d="M1 22v-8l5 6 8-10 8 9v3z"/><path class="k" d="M1 14v8h22"/></svg>
      <svg width="23" height="23"><path class="b" d="M1 5l6 4 7-6 8 5v8l-6-5-7 8-8-7z"/><path class="k" d="M1 0v22h22"/></svg>
      <svg width="23" height="23"><path class="b" d="M1 3h21v13l-6-5-7 8-8-8z"/><path class="k" d="M1 0v22h22"/></svg>
      <svg width="23" height="23"><path class="w" d="M5 17h5v5H5zM15 10h5v12h-5z"/><path class="b" d="M5 3h5v14H5z"/><path class="g" d="M15 3h5v7h-5z"/><path class="k" d="M1 0v22h22M2 20l8-7 4 4 8-10"/></svg>
      <svg width="23" height="23"><path class="b" d="M5 11h5v11H5z"/><path class="w" d="M10 2h5v20h-5z"/><path class="g" d="M15 7h5v15h-5z"/><path class="k" d="M1 0v22h22M2 20l8-7 4 4 8-10"/></svg>
      <!-- ribbon, waterfall, funnel, scatter, pie, donut -->
      <svg width="23" height="23"><path d="M2 18c7-4 8 2 12 0s5-1 8 0M2 12c8-5 9 4 20-1" fill="none" stroke="#e0882f" stroke-width="3"/><path d="M2 5c6 0 7 4 11 2s5-4 9-3" fill="none" stroke="#a19f9d" stroke-width="3.500"/><path d="M2 9c5 0 6 9 11 8s4-9 9-8" fill="none" stroke="#3a7fc4" stroke-width="3.500"/><path class="k" d="M1 0v22h22"/></svg>
      <svg width="23" height="23"><path class="w" d="M4 7h5v15H4zM17 2h5v20h-5z"/><path class="g" d="M9 7h4v7H9z"/><path d="M13 2h3v12h-3z" fill="#2a66b2"/><path class="k" d="M1 0v22h22"/></svg>
      <svg width="23" height="23"><path class="b" d="M1 2h22v6H1zM4 8h16v7H4zM8 15h8v6H8z"/></svg>
      <svg width="23" height="23"><path class="k" d="M1 0v22h22"/><path d="M17 1h4v4h-4zM4 15h4v4H4z" fill="#3b3a39"/><path d="M4 5h4v4H4zM10 9h4v4h-4zM17 14h4v4h-4z" fill="#7fb2e6"/></svg>
      <svg width="23" height="23"><circle class="w" cx="11.500" cy="11.500" r="10.700"/><path class="b" d="M11.500 11.500V1a10.500 10.500 0 0 1 7.500 18z"/></svg>
      <svg width="23" height="23"><circle class="w" cx="11.500" cy="11.500" r="10.700"/><path class="b" d="M11.500.8A10.700 10.700 0 1 1 .8 11.500h5a5.700 5.700 0 1 0 5.700-5.700z"/><circle class="k1" cx="11.500" cy="11.500" r="5.500"/></svg>
      <!-- treemap, maps, gauge, card -->
      <svg width="23" height="23"><path class="w" d="M11 1h11v21H11zM11 7h11M16 7v15M11 14h5M16 16h6"/><path class="b" d="M1 1h10v21H1zM1 13h10"/></svg>
      <svg width="23" height="23"><circle class="w" cx="13" cy="9.500" r="7"/><path d="M9 4c4-2 4 3 1 5-2 1 0 4-2 4-3-3-2-7 1-9zM14 6l4-1c2 4 1 8-3 9 0-3 1-3-1-5z" fill="#4d9a55"/><path class="k" d="M9 0C-1 6 3 18 12 18v4M4 22h16M12 18q6 0 8-4"/></svg>
      <svg width="23" height="23"><path class="g" d="M1 2q5 1 9 0l4 2q4-2 8-2v8l-2 3v4l-4 4-6-1-4 1-4-5V12l-1-5z"/><path class="b" d="M1 1l9 1v4l-2 4H3L1 6zM13 11h8l-1 6-4 4-5-1 1-4z"/></svg>
      <svg width="23" height="25"><path d="M15-1L2 20l10-4z" fill="#5aa5cd"/><path d="M15-1l5 25-8-8z" fill="#2f7fc0"/><path d="M15-1l3 13-6 4z" fill="#7cc3df"/></svg>
      <svg width="23" height="23"><path class="w" d="M1 16C2 3 21 3 22 16h-5c-1-6-10-6-11 0z"/><path class="b" d="M7 7c8-4 15 2 15 9h-5c0-4-4-6-8-4z"/><path d="M15 9l-2 8h-3z" fill="#3b3a39"/></svg>
      <svg width="23" height="23"><rect class="w" x="1" y="3" width="21.500" height="16.500"/><text x="2.500" y="15.500" font-size="11" fill="#3a8bd6">123</text></svg>
      <!-- multi-row card, KPI, slicer, table, matrix, R -->
      <svg width="23" height="23"><rect class="w" x="1" y="1" width="21.500" height="21.500"/><path d="M7 6h13M7 14h13" stroke="#2a66b2" stroke-width="2"/><path class="k1" d="M4.500 4v15M7 10h6M7 18h6"/></svg>
      <svg width="23" height="23"><rect class="w" x="1" y="2" width="21.500" height="18"/><path d="M3 13l4-8 4 8z" fill="#4d9a55"/><path d="M12 5h8l-4 8z" fill="#c8413a"/><path d="M3 16.500h17" stroke="#a19f9d" stroke-width="1.500"/></svg>
      <svg width="23" height="23"><path d="M1 1h21v4H1z" fill="#c8c6c4"/><path class="k" d="M12 22H1V1h21v8M1 5h21"/><path class="g" d="M5 9h4v4H5zM5 15h4v4H5z"/><path class="w" d="M12 12h11l-4 5v6h-3v-6z"/></svg>
      <svg width="23" height="23"><path class="w" d="M1 1h21v21H1z"/><path d="M2 2h19v3H2z" fill="#c8c6c4"/><path d="M1 5.500h21M1 11h21M1 16.500h21M8 6v16M15 6v16" stroke="#797775" stroke-width="1.200"/><path class="k" d="M1 1h21v21H1z"/></svg>
      <svg width="23" height="23"><path class="w" d="M1 1h21v21H1z"/><path d="M15 6h7v16H1v-5h14z" fill="#8fbce9"/><path d="M2 2h19v3H2z" fill="#c8c6c4"/><path d="M1 5.500h21M1 11h21M1 16.500h21M8 6v16M15 6v16" stroke="#5b6f86" stroke-width="1.200"/><path class="k" d="M1 1h21v21H1z"/></svg>
      <svg width="23" height="23"><text x="4.500" y="18.500" font-size="20" font-weight="700" fill="#3f86c6" textLength="11.500" lengthAdjust="spacingAndGlyphs">R</text></svg>
      <!-- python, key influencers, decomposition tree, Q&A, narrative, goals -->
      <svg width="23" height="23"><text x="-.5" y="16" font-size="19" font-weight="700" fill="#3f86c6" textLength="23.500" lengthAdjust="spacingAndGlyphs">Py</text></svg>
      <svg width="23" height="23"><path class="k" d="M1 0v22h22"/><path d="M2 5h15" stroke="#2a66b2" stroke-width="1.600"/><circle class="b" cx="18.500" cy="5" r="3"/><path class="k1" d="M2 11h9M2 16h5" stroke="#797775"/><circle class="g" cx="13.500" cy="11" r="1.700"/><circle class="g" cx="8.500" cy="16.500" r="1.700"/></svg>
      <svg width="23" height="23"><path class="k" d="M8 11h14M14 3h-2v16h2"/><path class="b" d="M1 9h7v5H1zM14 1h8v5h-8zM14 9h8v5h-8zM14 17h8v4h-8z"/></svg>
      <svg width="23" height="23"><path d="M1 2h21v14H9l-4 5v-5H1z" fill="#fafafa" stroke="#2a66b2" stroke-width="1.600"/></svg>
      <svg width="23" height="23"><path class="w" d="M3 14v8h17V6l-5-5H3v5M14 1v6h6"/><circle class="b" cx="3" cy="9" r="2.300"/><path d="M8 10h9M6 15h8" stroke="#3a8bd6" stroke-width="1.500"/></svg>
      <svg width="23" height="23"><path class="w" d="M6 1h11v9c0 4-3 5-5.500 5S6 14 6 10z"/><path class="k" d="M6 3H1c0 6 2 8 5 8M17 3h5c0 6-2 8-5 8M11.500 15v5"/><path class="b" d="M6 1h11v2H6zM6 19h11v3H6z"/></svg>
      <!-- paginated report, new card, new slicer, map, apps -->
      <svg width="23" height="24"><path class="w" d="M3 0h12l5 5v19H3zM15 0v5h5"/><path d="M5 14h3v7H5zM10 17h3v4h-3zM14 11h3v10h-3z" fill="#3b3a39"/></svg>
      <svg width="23" height="23"><path class="w" d="M8 3h14.500v17H1v-6"/><text x="4" y="16" font-size="11" fill="#3a8bd6">123</text><path d="M3-1h6L7 4h3L1 13l2-6H0z" fill="#ffc068" stroke="#cf6f20" stroke-width="1.300"/></svg>
      <svg width="23" height="23"><path class="k" d="M12 22H1v-8M8 1h14v8M8 5h14"/><path d="M9 1h13v3.500H9z" fill="#c8c6c4"/><path class="g" d="M5 15h4v4H5z"/><path class="w" d="M12 12h11l-4 5v6h-3v-6z"/><path d="M3-1h6L7 4h3L1 13l2-6H0z" fill="#ffc068" stroke="#cf6f20" stroke-width="1.300"/></svg>
      <svg width="23" height="23"><path d="M2 11v11h11l1-6 5-2 3-4V1H8" fill="#fafafa" stroke="#2a66b2" stroke-width="1.600"/><path d="M5 21c0-6 4-5 7-7 2-3 0-7 4-9l6-3v8l-4 1-1 4-5 3v3z" fill="#8fbce9" stroke="#2a66b2" stroke-width="1"/><path d="M-1 3c0-6 8-6 8 0 0 3-2 5-4 9-2-4-4-6-4-9z" fill="#cf6f20"/><circle cx="3" cy="3" r="1.500" fill="#fff"/><circle cx="19" cy="20" r="3.300" fill="#cf6f20"/><circle cx="21.500" cy="13" r="2" fill="#cf6f20"/></svg>
      <svg width="23" height="23" fill="none" stroke="#8b3d96" stroke-width="1.500"><path d="M8 1.500h7l7.500 10-7.500 10H8L.5 11.500z"/><rect x="8" y="4" width="5.500" height="5.500" rx="2" transform="rotate(45 10.750 6.750)"/><rect x="12" y="8.500" width="5.500" height="5.500" rx="2" transform="rotate(45 14.750 11.250)"/><rect x="8" y="13" width="5.500" height="5.500" rx="2" transform="rotate(45 10.750 15.750)"/></svg>
      <svg width="23" height="23" fill="none" stroke="#2f77d6" stroke-width="1.500"><path d="M1 2h14l7 9-7 9.500H1l7-9.500zM1 20.500L15.500 2M8 20.500L19 7M8 2l3.500 5"/></svg>
    </div>
    <div style="height:27px;padding:0 0 0 16px;margin-top:7px"><svg width="20" height="4" viewBox="0 0 20 4" fill="#252423"><path d="M0 0h2v2H0zM8 0h2v2H8zM16 0h2v2h-2z"/></svg></div>
    <hr class="m-0" style="border-color:#cfcdcb;opacity:1">
    <div style="padding:11px 0 6px 15px;font-size:14px;line-height:20px;letter-spacing:-.05px">Values</div>
    <div class="well d-flex align-items-center" style="height:35px;padding-left:12px;letter-spacing:.1px">Add data fields here</div>
    <div style="padding:14px 0 0 15px;line-height:20px;font-weight:600;color:#4a4846;letter-spacing:.1px">Drill through</div>
    <div class="d-flex align-items-center justify-content-between" style="padding:0 27px 0 14px;margin-top:11px;height:20px;letter-spacing:.08px">Cross-report<span class="tog d-flex align-items-center bg-white" style="border:1.300px solid #605e5c;color:#605e5c;padding-left:5px;gap:2px;letter-spacing:-.1px"><svg width="10" height="10"><circle cx="5" cy="5" r="5" fill="#605e5c"/></svg>Off</span></div>
    <div class="d-flex align-items-center justify-content-between" style="padding:0 27px 0 14px;margin-top:14px;height:20px;letter-spacing:.04px">Keep all filters<span class="tog d-flex align-items-center text-white" style="background:#377865;padding-left:6px;gap:4px"><span>On</span><svg width="10" height="10"><circle cx="5" cy="5" r="5" fill="#fff"/></svg></span></div>
    <div class="well d-flex align-items-center" style="height:32px;margin-top:13px;padding-left:10px;letter-spacing:.15px;white-space:nowrap">Add drill-through fields here</div>
  </aside>

  <aside class="datapane">
    <div class="d-flex align-items-center justify-content-between" style="padding:13px 9px 0 10px"><span class="pane-h">Data</span><svg width="16" height="16" viewBox="0 0 16 16" fill="none" stroke="#252423" stroke-width="1.400"><path d="M1 1l7 7-7 7M8 1l7 7-7 7"/></svg></div>
    <div class="dsearch d-flex align-items-center" style="margin:20px 0 0 5px"><svg width="18" height="18" viewBox="0 0 18 18" fill="none" stroke="#605e5c" stroke-width="1.400"><circle cx="7.500" cy="7" r="6.300"/><path d="M12 11.500l5.500 5.500"/></svg><span style="padding-top:2px">Search</span></div>
    <div class="d-flex align-items-center" style="margin:16px 0 0 19px;height:20px;letter-spacing:.02px"><svg width="8" height="14" viewBox="0 0 8 14" fill="none" stroke="#605e5c" stroke-width="1.400"><path d="M.5.500L7 7 .5 13.500"/></svg><svg width="15" height="15" viewBox="0 0 15 15" fill="none" stroke="#3b3a39" stroke-width="1.500" style="margin:0 8px 0 9px"><rect x=".8" y=".8" width="13.500" height="13.500" rx="2.500"/><path d="M1 5h13M1 10h13M5 1v13M10 1v13"/></svg>Accounts</div>
  </aside>
</main>

<!-- Status bar -->
<footer class="status d-flex align-items-center flex-shrink-0">
  <span class="flex-grow-1" style="margin-left:-9px;margin-top:4px">Page 1 of 1</span>
  <span style="width:12px;font-size:16px;font-weight:600">-</span>
  <svg width="126" height="14" viewBox="0 0 126 14"><path d="M0 7h126M62.500 3v8" stroke="#605e5c" stroke-width="1.200"/><path d="M47 0h5v14h-5z" fill="#605e5c"/></svg>
  <svg width="10" height="10" viewBox="0 0 10 10" style="margin-left:6px"><path d="M5 0v10M0 5h10" stroke="#3b3a39" stroke-width="1.500"/></svg>
  <span style="margin-left:16px;width:53px;color:#605e5c">82%</span>
  <svg width="20" height="16" viewBox="0 0 20 16" fill="none" stroke="#605e5c" stroke-width="1.500" style="margin-right:22px"><path d="M.8.800h18.500v14.500H.8zM3.500 6V3.500H6M14 3.500h2.500V6M16.500 10v2.500H14M6 12.500H3.500V10"/></svg>
</footer>

<!-- Windows taskbar -->
<div class="task d-flex align-items-center flex-shrink-0">
  <div style="width:307px;padding-left:12px">
    <svg width="36" height="38" viewBox="0 0 36 38" style="margin-top:-3px"><path d="M14 4q-2 0-3 2L1 32q-1 4 3 4h22q4 0 3-4L18 6q-1-2-4-2z" fill="#e05a0c"/><path d="M6 26c1-10 18-10 19 0-1-1-4-1-5 0-1-1-4-1-5 0-1-1-3-1-4 0-1-1-4-1-5 0z" fill="#fff"/><path d="M15 25v7q-1 3-3 1M9 28v4M20 28v4" stroke="#fff" stroke-width="1.500" fill="none"/><circle cx="24" cy="10" r="10" fill="#c42b1c"/><text x="21" y="14.500" font-size="12" fill="#fff">1</text></svg>
  </div>
  <svg width="29" height="29" viewBox="0 0 29 29"><defs><linearGradient id="win" x1="0" y1="0" x2="1" y2="1"><stop offset="0" stop-color="#4fc8fb"/><stop offset="1" stop-color="#0067c8"/></linearGradient></defs><path d="M0 0h14v14H0zM15 0h14v14H15zM0 15h14v14H0zM15 15h14v14H15z" fill="url(#win)"/></svg>
  <div class="tsearch d-flex align-items-center" style="margin-left:17px">
    <svg width="19" height="19" viewBox="0 0 19 19" fill="none" stroke="#252423" stroke-width="2"><circle cx="8" cy="7.500" r="6.300"/><path d="M12.500 12.500l5.500 5.500"/></svg>
    <span class="flex-grow-1" style="margin-left:13px">Search</span>
    <svg width="58" height="32" viewBox="0 0 58 32" style="margin-right:6px"><path d="M28 20l6 9 2-7z" fill="#7a6fc0"/><path d="M16 19c-5-5 0-15 8-16 7-5 19 0 19 8 3 6-2 11-8 11-5 3-13 3-19-3z" fill="#f0836b"/><path d="M19 9c4-2 7 1 5 4M28 4c4 2 3 6 8 5M20 18c4-4 9 2 12-3M33 18c3-3 6-1 7-4" fill="none" stroke="#cf5746" stroke-width="1.500"/><path d="M5 8l2 3 3-2-1 4 3 1-4 1v4l-3-3-3 2 1-4-3-2h4z" fill="#d868b8"/><circle cx="6" cy="13" r="1.600" fill="#ffd34d"/><path d="M47 19l2 3 4-2-1 4 4 2-4 2v4l-4-3-4 2 1-4-3-3h5z" fill="#7a5cc4"/><circle cx="48" cy="25" r="1.600" fill="#ffd34d"/><path d="M9 28q3-8 10-8M12 25l-3-4M12 23l6 3M43 13q3-9 8-10M46 9l-4-3" fill="none" stroke="#23887a" stroke-width="2"/><circle cx="12" cy="4" r="2.300" fill="#f08080"/><circle cx="49" cy="4" r="3" fill="#e05090"/><circle cx="40" cy="28" r="2.500" fill="#e957a8"/><path d="M54 9l1 3 3 1-3 1-1 3-1-3-3-1 3-1z" fill="#f0b34a"/></svg>
  </div>
  <div class="d-flex" style="margin-left:4px">
    <div class="tslot"><svg width="30" height="29"><path d="M0 8h22v21H0z" fill="#2d2d2d"/><path d="M7 0h22v20H7z" fill="#fff" opacity=".8"/><path d="M7 8h15v12H7z" fill="#a9a7aa"/></svg></div>
    <div class="tslot"><svg width="30" height="30"><rect width="30" height="30" rx="3" fill="#4a4a4a"/><path d="M22 5v5l-9 3 9 3v6L8 26v-5l9-3-9-3V9z" fill="#ff9800"/></svg></div>
    <div class="tslot run"><svg width="31" height="28"><path d="M0 3q0-2 2-2h8l3 3v8H0z" fill="#e0a000"/><rect y="4" width="31" height="23" rx="2" fill="#ffcf48"/><path d="M6 27v-5q0-2 2-2h15q2 0 2 2v5z" fill="#1478c8"/><path d="M9 23.500h13" stroke="#0a4f8c" stroke-width="1.500"/></svg></div>
    <div class="tslot"><svg width="30" height="30"><defs><linearGradient id="ms" x1="1" y1="0" x2="0" y2="1"><stop offset="0" stop-color="#00a8ff"/><stop offset="1" stop-color="#5a20f0"/></linearGradient></defs><path d="M0 0h30v30H0z" fill="url(#ms)"/><path d="M5 22l6-14M11 22l6-14M17 17l5-9v14M15 18h7" stroke="#fff" stroke-width="2.300" fill="none"/></svg></div>
    <div class="tslot"><svg width="31" height="31"><defs><linearGradient id="ed" x1="0" y1="0" x2="1" y2=".3"><stop offset="0" stop-color="#1c9ce0"/><stop offset="1" stop-color="#5be070"/></linearGradient></defs><circle cx="15.500" cy="15.500" r="15" fill="#0c5fae"/><path d="M0 16C0 5 8 0 16 0c9 0 15 6 15 13 0 6-4 8-8 8s-5-2-4-4c2-3-1-7-5-7-5 0-9 5-8 12C3 21 0 19 0 16z" fill="url(#ed)"/><path d="M14 13c-4 5-1 14 8 13l7-2c-5 8-14 7-18 4-5-4-4-12 3-15z" fill="#1380d2"/><path d="M19 17c-1 2 0 4 4 4 3 0 5-1 7-3-1 3-2 4-3 6-7 2-13-4-8-7z" fill="#f6e3e3"/></svg></div>
    <div class="tslot"><svg width="28" height="21"><path d="M0 3v16q0 2 2 2h4V8z" fill="#4285f4"/><path d="M28 3v16q0 2-2 2h-4V8z" fill="#34a853"/><path d="M0 3q0-3 3-3l11 9L25 0q3 0 3 3v2L14 15 0 5z" fill="#ea4335"/><path d="M22 3l3-3q3 0 3 3v4l-6 4z" fill="#fbbc04"/><path d="M0 4q0-3 3-4l3 3v8L0 7z" fill="#c5221f"/></svg></div>
    <div class="tslot"><svg width="30" height="30"><path fill-rule="evenodd" d="M15 0a15 15 0 1 1 0 30 15 15 0 0 1 0-30zm0 4c-4 0-6 5-6 11s2 11 6 11 6-5 6-11-2-11-6-11z" fill="#e2182c"/></svg></div>
    <div class="tslot run"><svg width="30" height="30"><path d="M22 0l8 3v24l-8 3z" fill="#2aa2ee"/><path d="M22 0v8L3 23l-3-2v-2z" fill="#0a6cbc"/><path d="M22 30v-8L3 7 0 9v2z" fill="#1384d6"/></svg></div>
    <div class="tslot"><svg width="30" height="30"><path d="M4 3l10-3 6 8-8 12L0 12z" fill="#fc3d79"/><path d="M17 2l12 6-3 18-10-6z" fill="#1a8cff"/><path d="M1 22l6-8 14 10-5 6z" fill="#ff8a1e"/><path d="M20 20l9-5-1 9-7 6z" fill="#12b5d8"/><path d="M6 6h18v18H6z" fill="#080808"/><path d="M8.500 9h4M10.500 9v6M8.500 15h4M15 9h3v5q0 1-3 1M8 21h7" stroke="#fff" stroke-width="1.400" fill="none"/></svg></div>
    <div class="tslot"><svg width="30" height="30"><circle cx="15" cy="15" r="15" fill="#fff"/><g fill="none" stroke-width="4"><path d="M22 9.500A9 9 0 0 0 7.500 10.500" stroke="#ea4335"/><path d="M7.500 10.500a9 9 0 0 0 0 9" stroke="#fbbc04"/><path d="M7.500 19.500a9 9 0 0 0 13 2.500" stroke="#34a853"/><path d="M20.500 22q3.500-3 3.500-6.500h-9" stroke="#4285f4"/></g></svg></div>
    <div class="tslot"><svg width="26" height="30"><path d="M16 1L4 13q-3 4 0 7l4 5" stroke="#1b1a1a" stroke-width="3.500" fill="none"/><path d="M6 23l4 4q4 3 8 0l3-3M10 9q5-3 10 3" stroke="#ffa116" stroke-width="3.500" fill="none"/><path d="M10 18h15" stroke="#b3b3b3" stroke-width="3"/></svg></div>
    <div class="tslot"><svg width="26" height="30"><path d="M7 0h12l3 4 3-1 1 6-3 14-10 7-10-7L0 9l1-6 3 1z" fill="#fb542b"/><path d="M13 6l5-1 4 4-3 7 1 3-7 6-7-6 1-3-3-7 4-4z" fill="#fff"/><path d="M8 11l4 2-1 5 2 2 2-2-1-5 4-2M10 21l3-2 3 2" fill="none" stroke="#fb542b" stroke-width="1.500"/></svg></div>
    <div class="tslot"><svg width="30" height="30"><circle cx="15" cy="15" r="15" fill="#fff"/><path d="M6 24l1.500-5a9 9 0 1 1 3.500 3.500z" fill="none" stroke="#25d366" stroke-width="2"/><path d="M11 10l2-.5 1.500 3-1 1.500q1 2 3.500 3l1.500-1.500 3 1.500q0 3-3 3-7-1-8.500-7 0-2 1-3z" fill="#25d366"/></svg></div>
    <div class="tslot"><svg width="30" height="30"><path d="M0 0h30v30H0z" fill="#74aa9c"/><g fill="none" stroke="#fff" stroke-width="1.400"><path id="pt" d="M9.500 13V8.500C9.500 4 15 3.500 17.500 6.500M11.800 17V9.800l6-3.400"/><use href="#pt" transform="rotate(60 15 15)"/><use href="#pt" transform="rotate(120 15 15)"/><use href="#pt" transform="rotate(180 15 15)"/><use href="#pt" transform="rotate(240 15 15)"/><use href="#pt" transform="rotate(300 15 15)"/></g></svg></div>
    <div class="tslot now"><svg width="24" height="30"><rect x="12" width="11" height="30" rx="1.500" fill="#d08f05"/><rect x="7" y="7" width="10" height="23" rx="1.500" fill="#edb81c"/><rect x="1" y="15" width="10" height="15" rx="1.500" fill="#f9dc6a"/></svg></div>
    <div class="tslot run"><svg width="36" height="36" style="left:3px;top:-3px"><path d="M0 6h30v30H0z" fill="#1b1b1b"/><path d="M15 9C4 9 0 20 6 27q3 4 6 4v-4q-4 1-5-3 3 3 5 2l1-2c-9-1-8-9-5-11l1-4 4 2h5l4-2 1 4c3 3 2 10-6 11l1 3v5c10-2 12-13 6-19-2-2-5-4-9-4z" fill="#fff"/><circle cx="26" cy="8" r="9.500" fill="#cfc5c0" stroke="#8c8583"/><path d="M23 3q3-4 6 0v10h-6z" fill="#252423"/><path d="M23 9h6v5h-6z" fill="#b3283a"/></svg></div>
  </div>
  <div class="d-flex align-items-center ms-auto">
    <svg width="14" height="8" viewBox="0 0 14 8" fill="none" stroke="#252423" stroke-width="1.600"><path d="M1 7l6-6 6 6"/></svg>
    <svg width="20" height="16" viewBox="0 0 20 16" fill="none" stroke="#252423" stroke-width="1.500" style="margin-left:23px"><path d="M1 6q9-9 18 0M4 9q6-6 12 0M7 12q3-3 6 0"/><circle cx="10" cy="14" r="1" fill="#252423"/></svg>
    <svg width="20" height="16" viewBox="0 0 20 16" fill="none" stroke="#252423" stroke-width="1.400" style="margin-left:10px"><path d="M1 5.500h3L8.500 1.500v13L4 10.500H1zM11 5q2 3 0 6M14 3q4 5 0 10M16.500 1q6 7 0 14"/></svg>
    <svg width="20" height="12" viewBox="0 0 20 12" fill="none" stroke="#252423" stroke-width="1.500" style="margin-left:10px"><rect x="1" y="1" width="15.500" height="10" rx="2.500"/><path d="M18.500 4v4"/><path d="M3 3h4v6H3z" fill="#252423" stroke="none"/></svg>
    <div class="clock" style="width:90px">11:16 PM<br>7/22/2024</div>
    <svg width="18" height="20" viewBox="0 0 18 20" style="margin-left:11px"><path d="M9 0c4 0 6 3 6 7v5l2 3v1H1v-1l2-3V7c0-4 2-7 6-7zM6.500 17.500h5Q11 20 9 20t-2.500-2.500z" fill="#15495a"/></svg>
    <svg width="31" height="31" viewBox="0 0 31 31" style="margin:0 23px 0 20px"><defs><linearGradient id="cp" x1="0" y1="0" x2="0" y2="1"><stop offset="0" stop-color="#1b6fe0"/><stop offset=".6" stop-color="#27b8a0"/><stop offset="1" stop-color="#d8d84a"/></linearGradient><linearGradient id="cq" x1="1" y1="0" x2="0" y2="1"><stop offset="0" stop-color="#b05cf0"/><stop offset=".6" stop-color="#f06a8a"/><stop offset="1" stop-color="#ffab4a"/></linearGradient></defs><path d="M8 0h10q3 0 4 4l1 3h-4q-3 0-4 4l-2 8q-1 4-5 4H4q-5 0-4-6L3 5q1-5 5-5z" fill="url(#cp)"/><path d="M18 7h6q6 0 5 6l-2 9q-1 4-5 4H9q4 0 5-4l2-11z" fill="url(#cq)"/><rect x="7" y="20" width="24" height="11" rx="2" fill="#ffd21f"/><text x="9.500" y="29" font-size="9.500" font-weight="700" fill="#252423">PRE</text></svg>
  </div>
</div>
<script src="https://cdn.jsdelivr.net/npm/bootstrap@5.3.0/dist/js/bootstrap.bundle.min.js"></script>
</body>
</html>
